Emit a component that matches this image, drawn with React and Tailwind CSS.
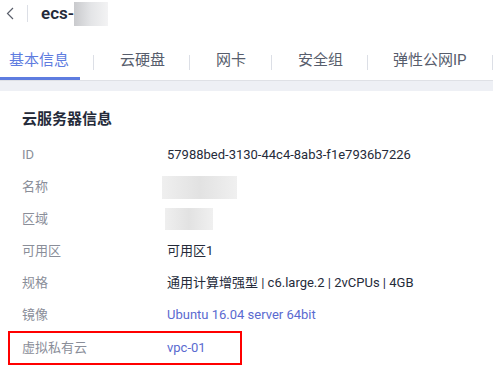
import React from 'react';

const rows = [
  { label: 'ID', value: '57988bed-3130-44c4-8ab3-f1e7936b7226' },
  { label: '名称', blur: 'w-[75px] h-[23px] -ml-[5px]' },
  { label: '区域', blur: 'w-[48px] h-[22px] -ml-[2px]' },
  { label: '可用区', value: '可用区1' },
  { label: '规格', value: '通用计算增强型 | c6.large.2 | 2vCPUs | 4GB' },
  { label: '镜像', value: 'Ubuntu 16.04 server 64bit', link: true },
];

const tabs = [
  { name: '基本信息', cls: 'w-[93px] pl-[9px] text-[#5e7ce0]' },
  { name: '云硬盘', cls: 'w-[95px] pl-[26px] text-[#575d6c]' },
  { name: '网卡', cls: 'w-[81px] pl-[26px] text-[#575d6c]' },
  { name: '安全组', cls: 'w-[95px] pl-[26px] text-[#575d6c]' },
  { name: '弹性公网IP', cls: 'w-[124px] pl-[25px] text-[#575d6c]' },
];

export default function App() {
  return (
    <div className="w-[493px] h-[375px] bg-white overflow-hidden font-['Roboto','Noto_Sans_CJK_SC',sans-serif] text-[#252b3a]">
      {/* header */}
      <div className="h-[27px] flex items-center">
        <svg className="ml-[6px] w-[8px] h-[13px]" viewBox="0 0 8 13" fill="none">
          <path d="M7 1L1.5 6.5L7 12" stroke="#5a5f6b" strokeWidth="1.2" />
        </svg>
        <div className="ml-[13px] w-px h-[17px] bg-[#dcdfe6]" />
        <span className="ml-[13px] text-[17px] font-semibold leading-none">ecs-</span>
        <div className="w-[34px] h-[24px] bg-gradient-to-r from-[#c9cacd] via-[#e4e5e7] to-[#f3f3f4]" />
      </div>

      {/* tabs */}
      <div className="mt-[20px] h-[30px] flex">
        {tabs.map((t) => (
          <div key={t.name} className="flex items-start">
            <div className={`${t.cls} text-[15px] leading-[26px]`}>{t.name}</div>
            <div className="mt-[8px] w-px h-[15px] bg-[#dcdfe6]" />
          </div>
        ))}
      </div>
      <div className="flex h-[3px]">
        <div className="w-[80px] bg-[#5e7ce0]" />
      </div>
      <div className="h-[11px] bg-[#eef0f5] border-t border-[#dfe1e6]" />

      {/* info */}
      <div className="pt-[18px] px-[22px]">
        <div className="text-[15px] font-bold leading-[20px] text-[#252b3a]">云服务器信息</div>
        <div className="mt-[10px] flex flex-col">
          {rows.map((r) => (
            <div key={r.label} className="h-[32px] flex items-center text-[13px]">
              <div className="w-[145px] text-[#8a8e99]">{r.label}</div>
              {r.blur ? (
                <div className={`${r.blur} bg-gradient-to-r from-[#efefef] via-[#e2e2e2] to-[#f0f0f0]`} />
              ) : (
                <div className={r.link ? 'text-[#5a6ad0]' : 'text-[#252b3a]'}>{r.value}</div>
              )}
            </div>
          ))}
          <div className="-mx-[14px] w-[234px] h-[34px] border-2 border-[#f00] flex items-center text-[13px]">
            <div className="pl-[12px] w-[157px] text-[#8a8e99]">虚拟私有云</div>
            <div className="text-[#5a6ad0]">vpc-01</div>
          </div>
        </div>
      </div>
    </div>
  );
}
